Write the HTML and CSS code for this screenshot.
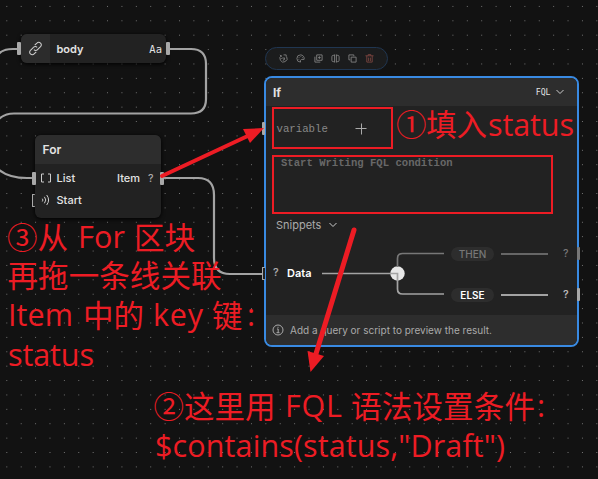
FILE: index.html
```html
<!DOCTYPE html>
<html lang="zh-CN">
<head>
<meta charset="utf-8">
<title>Flow editor</title>
<link rel="stylesheet" href="styles.css">
</head>
<body>
<main class="canvas">
  <svg class="layer wires" viewBox="0 0 598 479">
    <path d="M-2 55Q2 49 13 49H19"/>
    <path d="M168 49H191Q206 49 206 64V99Q206 113.500 191 113.500H14Q4 113.500 -2 120"/>
    <path d="M-2 169Q8 178 27 178H34"/>
    <path d="M162 178H198Q214 178 214 195V258Q214 274 230 274H264"/>
  </svg>

  <section class="node body-node">
    <i class="port body-in"></i><i class="port body-out"></i>
    <div class="link-cell"><svg width="15" height="15" viewBox="0 0 14 14"><path d="M6.300 3.900 8.300 1.900a2.300 2.300 0 0 1 3.400 0 2.300 2.300 0 0 1 0 3.400L8.900 8.100a2.300 2.300 0 0 1-3.400 0M7.700 10.100l-2 2a2.300 2.300 0 0 1-3.400 0 2.300 2.300 0 0 1 0-3.400l2.800-2.800a2.300 2.300 0 0 1 3.400 0"/></svg></div>
    <strong class="body-name">body</strong><span class="type">Aa</span>
  </section>

  <section class="node for-node">
    <i class="port for-in"></i><i class="port for-start"></i><i class="port for-out"></i>
    <header class="for-title">For</header>
    <div class="row"><svg width="12" height="12" viewBox="0 0 12 12"><path d="M4 2H1.500V10H4M8 2H10.500V10H8"/></svg><span class="name">List</span><span class="item">Item</span><span class="q">?</span></div>
    <div class="row"><svg width="12" height="12" viewBox="0 0 12 12"><path d="M2.300 4.700Q3.600 6 2.300 7.500M4.400 2.800Q7.200 6 4.400 9.300M6.700 1Q10.500 6 6.700 11"/></svg><span class="name">Start</span></div>
  </section>

  <div class="toolbar">
    <svg viewBox="0 0 10 10"><path d="M3 1.500A4 4 0 1 0 8.500 3M1 1l2 2M5 1h3v2M3.500 4.500h3l-2 3M6 6l1 1M2 5h1"/></svg>
    <svg viewBox="0 0 10 10"><path d="M5 1a4 4 0 1 0 0 8V7l1-1h3A4 4 0 0 0 5 1M3 4h.8M5 2.800h.8M7 4h.8M2.800 6h.8"/></svg>
    <svg viewBox="0 0 10 10"><path d="M3 1h6v6H3zM1 3v6h6M6 2.500v3M4.500 4h3"/></svg>
    <svg viewBox="0 0 10 10"><path d="M4 1.500H2.500Q1 1.500 1 3v4q0 1.500 1.500 1.500H4M6 1.500h1.500Q9 1.500 9 3v4q0 1.500-1.500 1.500H6M4 .5v9M6 .5v9"/></svg>
    <svg viewBox="0 0 10 10"><path d="M3.500 3.500h5.500v5.500h-5.500zM2.500 6.500h-1.500v-5.500h5.500v1.500"/></svg>
    <svg class="trash" viewBox="0 0 10 10"><path d="M.5 2h9M3.500 2V.7h3V2M2 2v7h6V2M4 4v4M6 4v4"/></svg>
  </div>

  <section class="node if-node">
    <header class="if-title"><b>If</b><span class="lang">FQL</span><svg width="10" height="8" viewBox="0 0 10 8"><path d="M1.500 2 5 5.500 8.500 2"/></svg></header>
    <div class="variable"><span>variable</span><svg width="12" height="12" viewBox="0 0 12 12"><path d="M6.500 .5v11M.5 5.500h11"/></svg></div>
    <div class="condition">Start Writing FQL condition</div>
    <div class="snippets"><span>Snippets</span><svg width="10" height="8" viewBox="0 0 10 8"><path d="M1.500 2 5 5.500 8.500 2"/></svg></div>
    <div class="branches">
      <span class="q data-q">?</span><span class="data">Data</span>
      <svg class="fork" width="122" height="60" viewBox="0 0 122 60"><circle cx="75.500" cy="29.500" r="7.200"/><path d="M0 29.500H75.500V45Q75.500 50 80.500 50H122"/><path class="dim" d="M75.500 23V14.500Q75.500 9.500 80.500 9.500H122"/></svg>
      <div class="outs">
        <div class="out off"><span class="pill">THEN</span><i class="line"></i><span class="oq">?</span></div>
        <div class="out"><span class="pill">ELSE</span><i class="line"></i><span class="oq">?</span></div>
      </div>
    </div>
    <footer class="note"><svg width="12" height="12" viewBox="0 0 12 12"><circle cx="6" cy="6" r="5"/><path d="M5 5h1.200v3.500M4.500 8.700h3M6 2.800v1"/></svg><span>Add a query or script to preview the result.</span></footer>
  </section>
  <i class="port if-in"></i><i class="port data-in"></i><i class="port then-out"></i><i class="port else-out"></i>

  <svg class="layer notes" viewBox="0 0 598 479">
    <path class="box" d="M273 108H392V148H273zM273 156H552V213H273z"/>
    <path class="stroke" d="M162 176 252 134"/><path class="head" d="M264 128 243 129 250 143z"/>
    <path class="stroke long" d="M354 230 315 357"/><path class="head" d="M310.500 372 307.500 351 324 356z"/>
    <text x="396" y="136" textLength="91">①填入</text><text x="488" y="136" textLength="86">status</text>
    <text x="7" y="248.500" textLength="61">③从</text><text x="78" y="248" textLength="47">For</text><text x="134" y="248.500" textLength="61">区块</text>
    <text x="7.500" y="287" textLength="214">再拖一条线关联</text>
    <text x="8" y="326" textLength="65">Item</text><text x="83" y="326.500" textLength="61">中的</text><text x="153" y="326" textLength="50">key</text><text x="212" y="326.500" textLength="31">键</text><text x="247" y="326">:</text>
    <text x="8" y="366" textLength="86">status</text>
    <text x="153.500" y="417.500" textLength="122">②这里用</text><text x="285" y="417" textLength="57">FQL</text><text x="351" y="417.500" textLength="184">语法设置条件</text><text x="537" y="417">:</text>
    <text x="155" y="457" textLength="350">$contains(status,"Draft")</text>
  </svg>
</main>
</body>
</html>
```
FILE: styles.css
```css
* { box-sizing: border-box; }
body { margin: 0; background: #121212; font-family: Inter, "Liberation Sans", sans-serif; color: #e2e2e2; }
svg { fill: none; stroke: #ccc; flex: none; }
.canvas { position: relative; width: 598px; height: 479px; overflow: hidden; background-image: radial-gradient(circle at 7.200px 7.200px, #777 .4px, transparent .9px); background-size: 14.400px 14.400px; background-position: -.4px -.8px; }
.layer { position: absolute; left: 0; top: 0; width: 598px; height: 479px; }
.wires { stroke: #a3a3a3; stroke-width: 2.200; }
.node { position: absolute; background: #222; box-shadow: 0 1px 4px #000; }
.port { position: absolute; width: 4px; height: 13px; background: #a8a8a8; border-radius: 1px; }

.body-node { left: 21px; top: 34px; width: 145px; height: 29px; border-radius: 6px; display: flex; align-items: center; }
.body-in { left: -4px; top: 8px; }
.body-out { right: -4px; top: 8px; }
.link-cell { width: 29px; height: 29px; display: flex; align-items: center; justify-content: center; background: #2c2c2c; border-radius: 6px 0 0 6px; }
.link-cell svg { margin-right: 1px; }
.body-name { margin-left: 6.500px; font-size: 11px; font-weight: 600; }
.type { margin-left: auto; margin-right: 4px; font: 10.500px "DejaVu Sans Mono", monospace; }

.for-node { left: 35px; top: 135px; width: 126px; height: 83px; border-radius: 6px; }
.for-in { left: -3px; top: 37px; }
.for-out { right: -3px; top: 37px; }
.for-start { left: -3px; top: 59px; width: 3px; border: 1px solid #aaa; border-right: 0; background: #222; }
.for-title { height: 29px; line-height: 29px; padding-left: 7.500px; border-radius: 6px 6px 0 0; background: #2d2d2d; font-size: 12px; font-weight: 600; margin-bottom: 3px; }
.row { height: 22px; display: flex; align-items: center; padding: 0 7px 0 5px; font-size: 11px; font-weight: 500; }
.name { margin-left: 4.500px; }
.item { margin-left: auto; margin-right: 8px; }
.q { width: 6px; color: #aaa; font-size: 10.500px; }

.toolbar { position: absolute; left: 265px; top: 47px; width: 123px; height: 23px; border: 1px solid #203651; border-radius: 12px; background: #1b1c1d; display: flex; align-items: center; padding-left: 13px; gap: 8.300px; }
.toolbar svg { width: 9px; height: 9px; stroke: #808080; }
.toolbar .trash { stroke: #7a453f; }

.if-node { left: 264px; top: 76px; width: 314.500px; height: 270.500px; border: 2px solid #398ae2; border-radius: 8px; overflow: hidden; display: flex; flex-direction: column; box-shadow: none; }
.if-title { height: 28px; display: flex; align-items: center; padding: 0 12px 0 7px; background: #2d2d2d; font-size: 12px; }
.lang { margin-left: auto; margin-right: 4px; font: 8.200px "DejaVu Sans Mono", monospace; }
.variable { height: 45px; display: flex; align-items: center; padding-left: 10.500px; gap: 27px; font: 10.700px "Liberation Mono", monospace; color: #888; }
.variable svg { stroke: #aaa; }
.condition { height: 66px; padding: 6px 0 0 15px; font: bold 10.600px "Liberation Mono", monospace; color: #686868; }
.snippets { height: 16px; display: flex; align-items: center; padding-left: 10px; gap: 7px; font-size: 11px; color: #aaa; }
.branches { height: 82px; display: flex; padding: 11px 0 0 7px; }
.data-q { margin: 22px 8px 0 0; font-weight: 600; }
.data { width: 35px; margin-top: 22px; font-size: 11px; font-weight: 600; color: #fff; }
.fork { stroke: #a3a3a3; stroke-width: 1.700; }
.fork circle { fill: #e7e7e7; stroke: none; }
.fork .dim { stroke: #777; }
.outs { padding-left: 7px; }
.out { height: 41px; display: flex; align-items: center; margin-top: -11px; }
.out + .out { margin-top: 0; }
.pill { width: 43px; height: 14px; border-radius: 7px; background: #2d2d2d; color: #fff; font-size: 10px; font-weight: 600; line-height: 14px; text-align: center; }
.line { width: 47px; height: 2px; background: #a3a3a3; margin: 0 15px 0 7px; }
.oq { font-size: 10.500px; font-weight: 600; color: #bbb; }
.off .pill, .off .oq { color: #777; font-weight: 500; }
.off .line { background: #666; }
.note { flex: 1; display: flex; align-items: center; gap: 6px; padding-left: 6px; background: #2d2d2d; color: #aaa; font-size: 10px; }
.note svg { stroke: #aaa; }
.if-in { left: 262px; top: 122px; width: 3px; }
.data-in { left: 262px; top: 267px; width: 3px; border: 1px solid #aaa; border-right: 0; background: #222; }
.then-out { left: 577px; top: 247px; width: 3px; background: #777; }
.else-out { left: 577px; top: 288px; width: 3px; }

.notes text { fill: #ed1c24; stroke: none; font: 30.500px "Open Sans", "Noto Sans CJK SC", sans-serif; }
.box { stroke: #ed1c24; stroke-width: 2; }
.stroke { stroke: #ed1c24; stroke-width: 4; stroke-linecap: round; }
.long { stroke-width: 5; }
.head { fill: #ed1c24; stroke: none; }
```
